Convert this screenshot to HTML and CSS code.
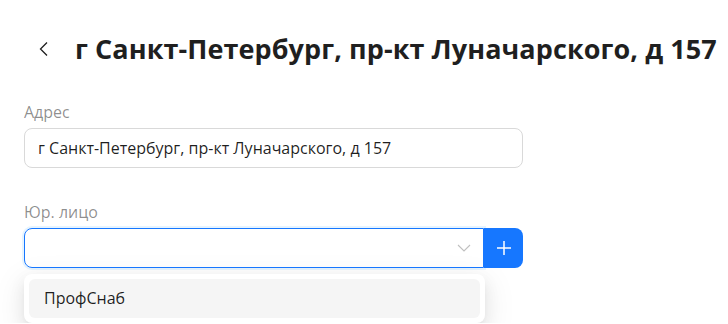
FILE: index.html
```html
<!DOCTYPE html>
<html lang="ru">
<head>
<meta charset="utf-8">
<link rel="stylesheet" href="styles.css">
</head>
<body>
<div class="page">
  <div class="header">
    <span class="back">
      <svg width="16" height="16" viewBox="0 0 16 16"><polyline points="11,1.5 4.5,8 11,14.5" fill="none" stroke="#1f1f1f" stroke-width="1.3"/></svg>
    </span>
    <h1 class="title">г Санкт-Петербург, пр-кт Луначарского, д 157</h1>
  </div>

  <div class="field">
    <div class="label">Адрес</div>
    <div class="input">г Санкт-Петербург, пр-кт Луначарского, д 157</div>
  </div>

  <div class="field field-select">
    <div class="label">Юр. лицо</div>
    <div class="group">
      <div class="select">
        <svg class="arrow" width="14" height="8" viewBox="0 0 14 8"><polyline points="1,1 7,7 13,1" fill="none" stroke="#bfbfbf" stroke-width="1.1"/></svg>
      </div>
      <div class="add">
        <svg width="16" height="16" viewBox="0 0 16 16"><path d="M8 1v14M1 8h14" stroke="#fff" stroke-width="1.5" fill="none"/></svg>
      </div>
    </div>
    <div class="dropdown">
      <div class="option">ПрофСнаб</div>
    </div>
  </div>
</div>
</body>
</html>
```

FILE: styles.css
```css
* { box-sizing: border-box; }
html, body { margin: 0; padding: 0; background: #fff; }
body {
  font-family: "Open Sans", "Noto Sans", sans-serif;
  color: rgba(0,0,0,0.88);
}
.page { padding: 30px 24px 0 24px; width: 728px; }

.header { display: flex; align-items: center; height: 38px; }
.back { width: 51px; flex-shrink: 0; display: flex; padding-left: 12px; }
.back svg { display: block; }
.title {
  margin: 0;
  font-size: 27px;
  font-weight: 700;
  line-height: 38px;
  white-space: nowrap;
  letter-spacing: 0.08px;
  color: #1f1f1f;
}

.field { width: 499px; margin-top: 32px; }
.label {
  font-size: 16px;
  line-height: 24px;
  color: rgba(0,0,0,0.45);
  margin-bottom: 4px;
}
.input {
  height: 40px;
  border: 1px solid #d9d9d9;
  border-radius: 8px;
  padding: 0 13px;
  font-size: 16px;
  line-height: 38px;
  white-space: nowrap;
}

.group { display: flex; height: 40px; }
.select {
  flex: 1;
  border: 1px solid #1677ff;
  border-radius: 8px 0 0 8px;
  box-shadow: 0 0 0 2px rgba(5,145,255,0.1);
  display: flex;
  align-items: center;
  justify-content: flex-end;
  padding-right: 12px;
}
.arrow { display: block; }
.add {
  width: 39px;
  background: #1677ff;
  border-radius: 0 8px 8px 0;
  display: flex;
  align-items: center;
  justify-content: center;
}
.add svg { display: block; }

.dropdown {
  margin-top: 6px;
  width: 461px;
  background: #fff;
  border-radius: 8px;
  padding: 5px;
  box-shadow: 0 6px 16px 0 rgba(0,0,0,0.08), 0 3px 6px -4px rgba(0,0,0,0.12), 0 9px 28px 8px rgba(0,0,0,0.05);
}
.option {
  background: #f5f5f5;
  border-radius: 6px;
  height: 39px;
  line-height: 39px;
  padding: 0 15px;
  font-size: 16px;
}
```
